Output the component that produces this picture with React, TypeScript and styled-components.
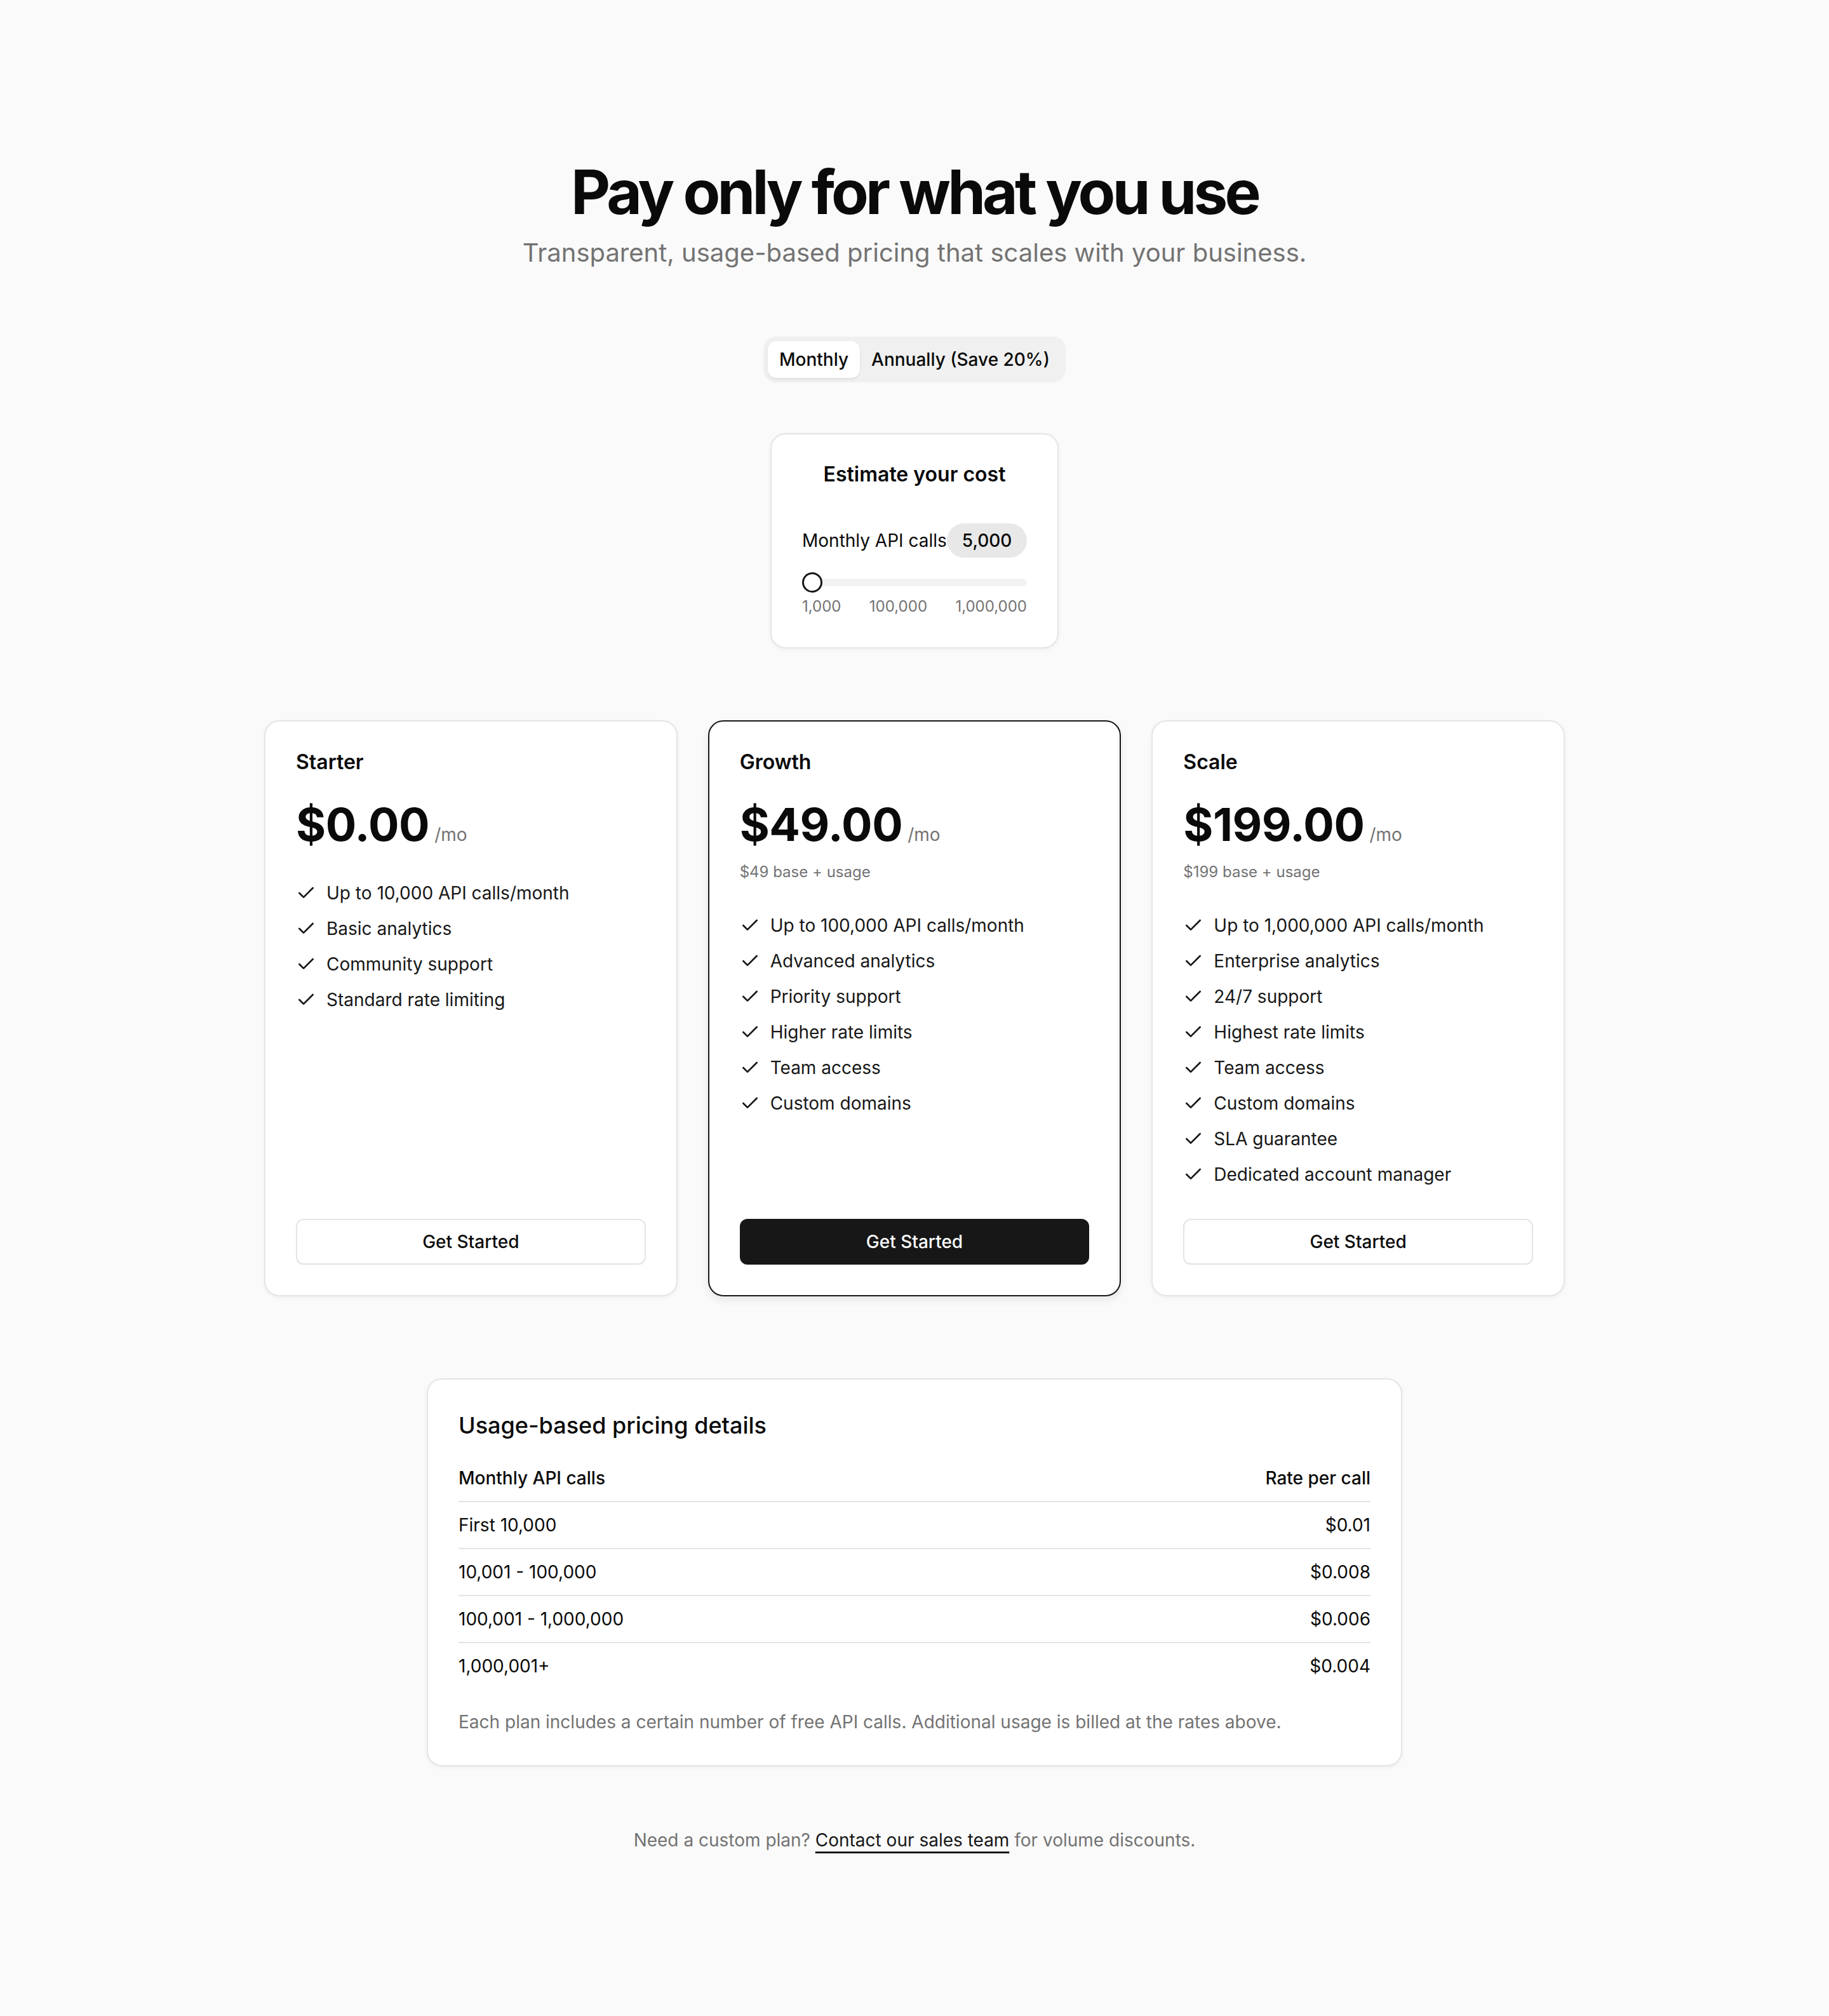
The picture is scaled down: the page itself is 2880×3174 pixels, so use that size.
import styled, { createGlobalStyle } from "styled-components";
import { Check } from "lucide-react";

type Plan = {
  name: string;
  price: string;
  note?: string;
  features: string[];
  featured?: boolean;
};

const plans: Plan[] = [
  {
    name: "Starter",
    price: "$0.00",
    features: [
      "Up to 10,000 API calls/month",
      "Basic analytics",
      "Community support",
      "Standard rate limiting",
    ],
  },
  {
    name: "Growth",
    price: "$49.00",
    note: "$49 base + usage",
    featured: true,
    features: [
      "Up to 100,000 API calls/month",
      "Advanced analytics",
      "Priority support",
      "Higher rate limits",
      "Team access",
      "Custom domains",
    ],
  },
  {
    name: "Scale",
    price: "$199.00",
    note: "$199 base + usage",
    features: [
      "Up to 1,000,000 API calls/month",
      "Enterprise analytics",
      "24/7 support",
      "Highest rate limits",
      "Team access",
      "Custom domains",
      "SLA guarantee",
      "Dedicated account manager",
    ],
  },
];

const rates = [
  { range: "First 10,000", rate: "$0.01" },
  { range: "10,001 - 100,000", rate: "$0.008" },
  { range: "100,001 - 1,000,000", rate: "$0.006" },
  { range: "1,000,001+", rate: "$0.004" },
];

export default function App() {
  return (
    <>
      <GlobalStyle />
      <Page>
        <Title>Pay only for what you use</Title>
        <Subtitle>Transparent, usage-based pricing that scales with your business.</Subtitle>

        <Toggle>
          <Tab $active>Monthly</Tab>
          <Tab>Annually (Save 20%)</Tab>
        </Toggle>

        <EstimateCard>
          <EstimateTitle>Estimate your cost</EstimateTitle>
          <CallsRow>
            <CallsLabel>Monthly API calls</CallsLabel>
            <CallsBadge>5,000</CallsBadge>
          </CallsRow>
          <Slider>
            <Track />
            <Thumb />
          </Slider>
          <Ticks>
            <span>1,000</span>
            <span>100,000</span>
            <span>1,000,000</span>
          </Ticks>
        </EstimateCard>

        <PlanGrid>
          {plans.map((plan) => (
            <PlanCard key={plan.name} $featured={plan.featured}>
              <PlanName>{plan.name}</PlanName>
              <PriceRow>
                <Amount>{plan.price}</Amount>
                <Per>/mo</Per>
              </PriceRow>
              {plan.note && <BaseNote>{plan.note}</BaseNote>}
              <Features>
                {plan.features.map((f) => (
                  <Feature key={f}>
                    <Check size={32} strokeWidth={2} color="#171717" />
                    {f}
                  </Feature>
                ))}
              </Features>
              <CardFooter>
                <Cta $primary={plan.featured}>Get Started</Cta>
              </CardFooter>
            </PlanCard>
          ))}
        </PlanGrid>

        <DetailsCard>
          <DetailsTitle>Usage-based pricing details</DetailsTitle>
          <RateTable>
            <thead>
              <tr>
                <Th>Monthly API calls</Th>
                <Th $right>Rate per call</Th>
              </tr>
            </thead>
            <tbody>
              {rates.map((r) => (
                <tr key={r.range}>
                  <Td>{r.range}</Td>
                  <Td $right>{r.rate}</Td>
                </tr>
              ))}
            </tbody>
          </RateTable>
          <Footnote>
            Each plan includes a certain number of free API calls. Additional usage is billed at the
            rates above.
          </Footnote>
        </DetailsCard>

        <Footer>
          Need a custom plan? <SalesLink href="#">Contact our sales team</SalesLink> for volume
          discounts.
        </Footer>
      </Page>
    </>
  );
}

const GlobalStyle = createGlobalStyle`
  * { box-sizing: border-box; }
  html, body {
    margin: 0;
    padding: 0;
    background: #fafafa;
  }
  body {
    font-family: "Inter", "Noto Sans", sans-serif;
    color: #0a0a0a;
    -webkit-font-smoothing: antialiased;
  }
`;

const Page = styled.main`
  min-height: 3174px;
  padding: 254px 0 200px;
  display: flex;
  flex-direction: column;
  align-items: center;
`;

const Title = styled.h1`
  margin: 0;
  font-size: 96px;
  line-height: 96px;
  font-weight: 700;
  letter-spacing: -4.8px;
  color: #0a0a0a;
`;

const Subtitle = styled.p`
  margin: 20px 0 0;
  font-size: 40px;
  line-height: 56px;
  color: #737373;
`;

const Toggle = styled.div`
  margin-top: 104px;
  display: flex;
  padding: 7px;
  background: #f0f0f0;
  border-radius: 20px;
`;

const Tab = styled.button<{ $active?: boolean }>`
  height: 58px;
  padding: 0 18px;
  border: none;
  border-radius: 14px;
  font-family: inherit;
  font-size: 28px;
  font-weight: 500;
  color: #0a0a0a;
  background: ${(p) => (p.$active ? "#ffffff" : "transparent")};
  box-shadow: ${(p) => (p.$active ? "0 2px 4px rgba(0, 0, 0, 0.08)" : "none")};
  cursor: pointer;
`;

const EstimateCard = styled.section`
  margin-top: 80px;
  width: 454px;
  padding: 48px;
  background: #ffffff;
  border: 2px solid #e5e5e5;
  border-radius: 24px;
  box-shadow: 0 2px 6px rgba(0, 0, 0, 0.05);
`;

const EstimateTitle = styled.h2`
  margin: 0;
  text-align: center;
  font-size: 32px;
  line-height: 30px;
  font-weight: 600;
`;

const CallsRow = styled.div`
  margin-top: 62px;
  display: flex;
  justify-content: space-between;
  align-items: center;
`;

const CallsLabel = styled.span`
  font-size: 28px;
  line-height: 40px;
  white-space: nowrap;
`;

const CallsBadge = styled.span`
  flex-shrink: 0;
  height: 54px;
  padding: 0 24px;
  display: flex;
  align-items: center;
  border-radius: 999px;
  background: #e8e8e8;
  font-size: 28px;
  font-weight: 500;
`;

const Slider = styled.div`
  position: relative;
  margin-top: 23px;
  height: 32px;
  display: flex;
  align-items: center;
`;

const Track = styled.div`
  width: 100%;
  height: 12px;
  border-radius: 999px;
  background: #f2f2f2;
`;

const Thumb = styled.div`
  position: absolute;
  left: 0;
  top: 0;
  width: 32px;
  height: 32px;
  border-radius: 50%;
  background: #ffffff;
  border: 3px solid #171717;
`;

const Ticks = styled.div`
  margin-top: 6px;
  display: flex;
  justify-content: space-between;
  font-size: 24px;
  line-height: 32px;
  color: #737373;
`;

const PlanGrid = styled.div`
  margin-top: 113px;
  width: 100%;
  max-width: 2048px;
  display: grid;
  grid-template-columns: repeat(3, 1fr);
  gap: 48px;
`;

const PlanCard = styled.div<{ $featured?: boolean }>`
  display: flex;
  flex-direction: column;
  padding: 48px;
  background: #ffffff;
  border: 2px solid ${(p) => (p.$featured ? "#171717" : "#e5e5e5")};
  border-radius: 24px;
  box-shadow: ${(p) =>
    p.$featured ? "0 6px 14px rgba(0, 0, 0, 0.08)" : "0 2px 6px rgba(0, 0, 0, 0.05)"};
`;

const PlanName = styled.h3`
  margin: 0;
  font-size: 32px;
  line-height: 32px;
  font-weight: 600;
`;

const PriceRow = styled.div`
  margin-top: 42px;
  display: flex;
  align-items: baseline;
  gap: 8px;
`;

const Amount = styled.span`
  font-size: 72px;
  line-height: 80px;
  font-weight: 700;
  letter-spacing: -0.5px;
`;

const Per = styled.span`
  font-size: 28px;
  color: #737373;
`;

const BaseNote = styled.p`
  margin: 19px 0 0;
  font-size: 24px;
  line-height: 32px;
  color: #737373;
`;

const Features = styled.ul`
  margin: 48px 0 0;
  padding: 0;
  list-style: none;
  display: flex;
  flex-direction: column;
  gap: 16px;
`;

const Feature = styled.li`
  display: flex;
  align-items: center;
  gap: 16px;
  font-size: 28px;
  line-height: 40px;
  color: #171717;
`;

const CardFooter = styled.div`
  margin-top: auto;
  padding-top: 50px;
`;

const Cta = styled.button<{ $primary?: boolean }>`
  width: 100%;
  height: 72px;
  border-radius: 12px;
  font-family: inherit;
  font-size: 28px;
  font-weight: 500;
  cursor: pointer;
  color: ${(p) => (p.$primary ? "#ffffff" : "#0a0a0a")};
  background: ${(p) => (p.$primary ? "#171717" : "#ffffff")};
  border: 2px solid ${(p) => (p.$primary ? "#171717" : "#e5e5e5")};
  box-shadow: 0 1px 2px rgba(0, 0, 0, 0.04);
`;

const DetailsCard = styled.section`
  margin-top: 129px;
  width: 1536px;
  padding: 48px;
  background: #ffffff;
  border: 2px solid #e5e5e5;
  border-radius: 24px;
  box-shadow: 0 2px 6px rgba(0, 0, 0, 0.05);
`;

const DetailsTitle = styled.h2`
  margin: 0;
  font-size: 36px;
  line-height: 48px;
  font-weight: 500;
`;

const RateTable = styled.table`
  margin-top: 23px;
  width: 100%;
  border-collapse: collapse;
  font-size: 28px;
  line-height: 40px;
`;

const Th = styled.th<{ $right?: boolean }>`
  padding: 16px 0;
  text-align: ${(p) => (p.$right ? "right" : "left")};
  font-weight: 500;
  border-bottom: 2px solid #e5e5e5;
`;

const Td = styled.td<{ $right?: boolean }>`
  padding: 16px 0;
  text-align: ${(p) => (p.$right ? "right" : "left")};
  border-bottom: 2px solid #e5e5e5;

  tr:last-child > & {
    border-bottom: none;
  }
`;

const Footnote = styled.p`
  margin: 32px 0 0;
  font-size: 28px;
  line-height: 40px;
  color: #737373;
`;

const Footer = styled.p`
  margin: 96px 0 0;
  font-size: 28px;
  line-height: 40px;
  color: #737373;
`;

const SalesLink = styled.a`
  color: #171717;
  text-decoration: underline;
  text-decoration-thickness: 3px;
  text-underline-offset: 8px;
`;
